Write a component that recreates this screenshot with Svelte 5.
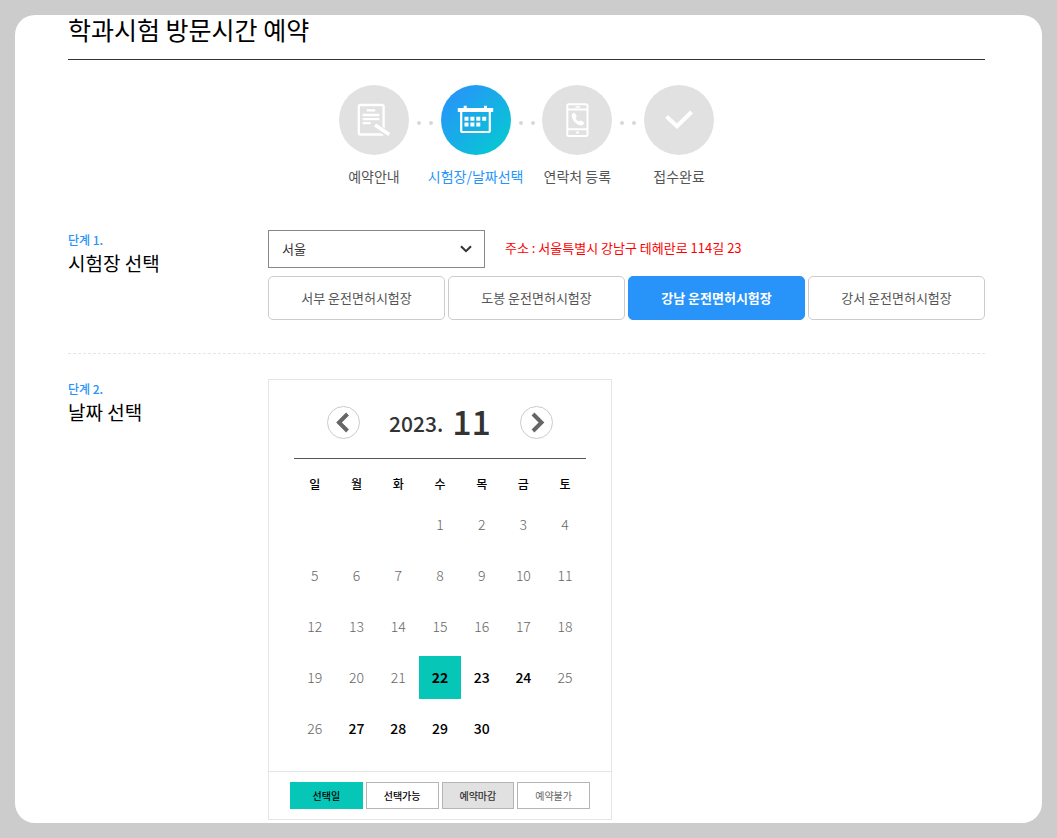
<script lang="ts">
  type DayState = "closed" | "open";

  const steps = [
    { icon: "guide", label: "예약안내" },
    { icon: "calendar", label: "시험장/날짜선택" },
    { icon: "phone", label: "연락처 등록" },
    { icon: "check", label: "접수완료" },
  ];
  const currentStep = 1;

  const places = ["서부", "도봉", "강남", "강서"];
  const weekdays = ["일", "월", "화", "수", "목", "금", "토"];
  const openDays = [22, 23, 24, 27, 28, 29, 30];

  let region = $state("서울");
  let place = $state("강남");
  let selectedDay = $state(22);

  // 2023-11-01 is a Wednesday
  const firstWeekday = 3;
  const lastDay = 30;

  const weeks: (number | null)[][] = [];
  for (let start = 1 - firstWeekday; start <= lastDay; start += 7) {
    weeks.push(
      weekdays.map((_, i) => {
        const day = start + i;
        return day >= 1 && day <= lastDay ? day : null;
      }),
    );
  }

  function dayState(day: number): DayState {
    return openDays.includes(day) ? "open" : "closed";
  }
</script>

<main class="card">
  <h1>학과시험 방문시간 예약</h1>

  <ol class="steps">
    {#each steps as step, i}
      {#if i > 0}
        <li class="dots" aria-hidden="true"><span></span><span></span></li>
      {/if}
      <li class="step" class:active={i === currentStep}>
        <span class="circle">
          {#if step.icon === "guide"}
            <svg viewBox="0 0 70 70" fill="none" stroke="#fff" stroke-width="2.300">
              <rect x="19.800" y="20" width="24.800" height="29.500" rx="1.500" />
              <path d="M27.700 25.400h8.500M23.700 30h16.600M23.700 34.200h16.600M23.700 38.200h8" />
              <path d="M36 40.500l14.500 9.800" stroke="#e1e1e1" stroke-width="6" />
              <path d="M36 40l14.200 9.600" stroke-width="3.600" />
            </svg>
          {:else if step.icon === "calendar"}
            <svg viewBox="0 0 70 70" fill="none" stroke="#fff" stroke-width="2.200">
              <path d="M20.200 26v19.500a1.500 1.500 0 0 0 1.500 1.500h25.600a1.500 1.500 0 0 0 1.500-1.500V26" />
              <path d="M16.800 25h35.400" stroke-width="4" />
              <path d="M24.200 20.800v4M44.500 20.800v4" stroke-width="3" />
              <path d="M23.500 33.800h22M23.500 39.500h16" stroke-width="4" stroke-dasharray="4 1.900" />
            </svg>
          {:else if step.icon === "phone"}
            <svg viewBox="0 0 70 70" fill="none" stroke="#fff" stroke-width="2">
              <rect x="25.300" y="19.300" width="20.200" height="31.800" rx="1.500" />
              <path d="M25 24.500h21M25 44.200h21" stroke-width="2" />
              <path d="M33.500 22h4.500" stroke-width="1.500" />
              <circle cx="35.500" cy="47.500" r="1.300" fill="#fff" stroke="none" />
              <path
                d="M31 28.200l-1.200 1.200c-.8 5.200 5 11.200 10.300 11l1.800-1.300c.5-.5.500-1.200 0-1.600l-2.200-1.800c-.6-.4-1.200-.4-1.700.1l-.8.8c-1.700-.8-2.900-2-3.600-3.700l.8-.8c.4-.6.400-1.100 0-1.600l-1.700-2.200c-.5-.6-1.100-.6-1.700-.1z"
                fill="#fff"
                stroke="none"
              />
            </svg>
          {:else}
            <svg viewBox="0 0 70 70" fill="none" stroke="#fff" stroke-width="4">
              <path d="M22.500 31.500L33 41.200 47.500 27" />
            </svg>
          {/if}
        </span>
        <span class="step-label">{step.label}</span>
      </li>
    {/each}
  </ol>

  <section class="row">
    <div class="row-title">
      <p>단계 1.</p>
      <h2 id="place-title">시험장 선택</h2>
    </div>
    <div class="row-body">
      <div class="region">
        <span class="select-wrap">
          <select aria-labelledby="place-title" bind:value={region}>
            <option>서울</option>
            <option>부산</option>
            <option>경기</option>
          </select>
          <svg viewBox="0 0 12 8" fill="none" stroke="#333" stroke-width="2">
            <path d="M1 1.200l5 5 5-5" />
          </svg>
        </span>
        <p class="address">주소 : 서울특별시 강남구 테헤란로 114길 23</p>
      </div>
      <div class="places">
        {#each places as name}
          <button
            type="button"
            class:selected={place === name}
            onclick={() => (place = name)}
          >
            {name} 운전면허시험장
          </button>
        {/each}
      </div>
    </div>
  </section>

  <section class="row">
    <div class="row-title">
      <p>단계 2.</p>
      <h2>날짜 선택</h2>
    </div>
    <div class="calendar">
      <div class="month-area">
        <div class="month-nav">
          <button type="button" aria-label="이전 달">
            <svg viewBox="1 1 31 31" fill="none" stroke="#666" stroke-width="4">
              <path d="M20.500 8L12 16.500l8.500 8.500" />
            </svg>
          </button>
          <p class="month"><span>2023.</span><strong>11</strong></p>
          <button type="button" aria-label="다음 달">
            <svg viewBox="1 1 31 31" fill="none" stroke="#666" stroke-width="4">
              <path d="M13 8l8.500 8.500-8.500 8.500" />
            </svg>
          </button>
        </div>
        <table>
          <thead>
            <tr>
              {#each weekdays as weekday}
                <th scope="col">{weekday}</th>
              {/each}
            </tr>
          </thead>
          <tbody>
            {#each weeks as week}
              <tr>
                {#each week as day}
                  <td>
                    {#if day}
                      <button
                        type="button"
                        class={dayState(day)}
                        class:picked={day === selectedDay}
                        disabled={dayState(day) === "closed"}
                        onclick={() => (selectedDay = day)}
                      >
                        {day}
                      </button>
                    {/if}
                  </td>
                {/each}
              </tr>
            {/each}
          </tbody>
        </table>
      </div>
      <ul class="legend">
        <li class="legend-picked">선택일</li>
        <li class="legend-open">선택가능</li>
        <li class="legend-full">예약마감</li>
        <li>예약불가</li>
      </ul>
    </div>
  </section>
</main>

<style>
  :global(body) {
    background: #ccc;
  }

  .card,
  .card button,
  .card select {
    font-family: "Noto Sans CJK KR", "Noto Sans", sans-serif;
  }

  .card {
    margin: 15px;
    padding: 0 57px 3px 53px;
    border-radius: 20px;
    background: #fff;
    color: #000;
  }

  h1,
  h2,
  p,
  ol,
  ul {
    margin: 0;
    padding: 0;
    list-style: none;
  }

  button {
    padding: 0 0 2px;
    cursor: pointer;
  }

  h1 {
    padding-bottom: 16px;
    border-bottom: 1px solid #333;
    font-size: 25px;
    font-weight: 400;
    line-height: 28px;
  }

  .steps {
    display: flex;
    max-width: 375px;
    margin: 25px auto 0;
  }

  .step {
    display: flex;
    flex: 0 0 70px;
    flex-direction: column;
    align-items: center;
    min-width: 0;
  }

  .circle {
    width: 70px;
    height: 70px;
    border-radius: 50%;
    background: #e1e1e1;
  }

  .circle svg {
    display: block;
  }

  .active .circle {
    background: linear-gradient(135deg, #2894fa 10%, #06c8d2 90%);
  }

  .step-label {
    margin-top: 11px;
    font-size: 14px;
    line-height: 20px;
    white-space: nowrap;
    color: #555;
  }

  .active .step-label {
    color: #2894fa;
  }

  .dots {
    display: flex;
    flex: 1;
    justify-content: center;
    gap: 8px;
    padding-top: 36px;
  }

  .dots span {
    width: 4px;
    height: 4px;
    border-radius: 50%;
    background: #d8d8d8;
  }

  .row {
    display: flex;
    align-items: flex-start;
  }

  .row:first-of-type {
    margin: 44px 0 25px;
    padding-bottom: 33px;
    border-bottom: 1px dashed #e5e5e5;
  }

  .row-title {
    flex: 0 0 200px;
  }

  .row-title p {
    font-size: 12px;
    font-weight: 500;
    line-height: 20px;
    color: #2894fa;
  }

  .row-title h2 {
    font-size: 19px;
    font-weight: 400;
    line-height: 26px;
  }

  .row-body {
    flex: 1;
  }

  .region {
    display: flex;
    align-items: center;
    gap: 20px;
    margin-bottom: 8px;
  }

  .select-wrap {
    display: grid;
    align-items: center;
    width: 217px;
  }

  .select-wrap select,
  .select-wrap svg {
    grid-area: 1 / 1;
  }

  .select-wrap svg {
    justify-self: end;
    width: 12px;
    margin-right: 13px;
    pointer-events: none;
  }

  select {
    width: 100%;
    height: 38px;
    padding: 0 13px 2px;
    border: 1px solid #888;
    border-radius: 0;
    background: #fff;
    appearance: none;
    font-size: 13px;
    color: #333;
  }

  .address {
    padding-bottom: 2px;
    font-size: 13px;
    line-height: 20px;
    color: #f00;
  }

  .places {
    display: grid;
    grid-template-columns: repeat(4, 1fr);
    gap: 3px;
  }

  .places button {
    height: 44px;
    border: 1px solid #ccc;
    border-radius: 5px;
    background: #fff;
    font-size: 13px;
    color: #555;
  }

  .places .selected {
    border-color: #2894fa;
    background: #2894fa;
    font-weight: 700;
    color: #fff;
  }

  .calendar {
    box-sizing: border-box;
    width: 344px;
    border: 1px solid #e5e5e5;
  }

  .month-area {
    padding: 16px 25px 17px;
  }

  .month-nav {
    display: flex;
    align-items: center;
    justify-content: center;
    gap: 29px;
    height: 52px;
    padding-bottom: 10px;
    border-bottom: 1px solid #555;
  }

  .month-nav button {
    width: 33px;
    height: 33px;
    padding: 0;
    border: 1px solid #ccc;
    border-radius: 50%;
    background: #fff;
  }

  .month-nav svg {
    display: block;
  }

  .month {
    display: flex;
    align-items: center;
    gap: 9px;
    padding-bottom: 2px;
    font-size: 21px;
    font-weight: 500;
    line-height: 44px;
    color: #333;
  }

  .month span {
    padding-top: 4px;
  }

  .month strong {
    font-size: 34px;
    font-weight: 500;
  }

  table {
    width: 100%;
    table-layout: fixed;
    border-collapse: collapse;
  }

  th {
    height: 30px;
    padding: 10px 0 0;
    font-size: 12px;
    font-weight: 500;
    line-height: 20px;
  }

  td {
    height: 43px;
    padding: 4px 0;
  }

  td button {
    display: block;
    width: 100%;
    height: 43px;
    border: 0;
    background: none;
    font-size: 14px;
    font-weight: 300;
    color: #666;
  }

  td .open {
    font-weight: 500;
    color: #000;
  }

  td .picked {
    background: #06c7b7;
    font-weight: 700;
  }

  .legend {
    display: grid;
    grid-template-columns: repeat(4, 1fr);
    gap: 3px;
    padding: 10px 21px;
    border-top: 1px solid #e5e5e5;
  }

  .legend li {
    border: 1px solid #b5b5b5;
    font-size: 10px;
    line-height: 25px;
    text-align: center;
    color: #666;
  }

  .legend .legend-picked {
    border-color: #06c7b7;
    background: #06c7b7;
    font-weight: 500;
    color: #000;
  }

  .legend .legend-open {
    font-weight: 500;
    color: #000;
  }

  .legend .legend-full {
    background: #e1e1e1;
    font-weight: 500;
    color: #333;
  }
</style>
